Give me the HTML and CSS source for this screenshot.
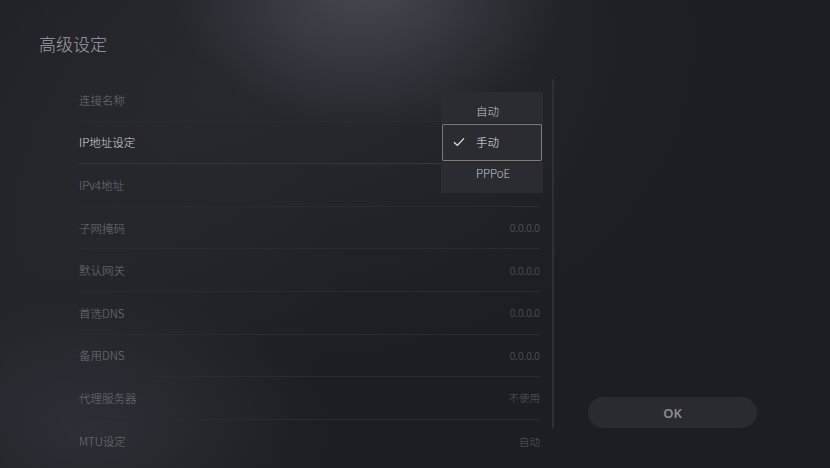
FILE: index.html
```html
<!DOCTYPE html>
<html>
<head>
    <title>高级设定</title>
    <link rel="stylesheet" href="styles.css">
</head>
<body>
    <div class="screen">
        <h1 class="title">高级设定</h1>

        <div class="content">
            <div class="settings">
                <div class="row"><span class="label">连接名称</span><span class="value"></span></div>
                <div class="row focused"><span class="label">IP地址设定</span><span class="value"></span></div>
                <div class="row"><span class="label">IPv4地址</span><span class="value"></span></div>
                <div class="row"><span class="label">子网掩码</span><span class="value">0.0.0.0</span></div>
                <div class="row"><span class="label">默认网关</span><span class="value">0.0.0.0</span></div>
                <div class="row"><span class="label">首选DNS</span><span class="value">0.0.0.0</span></div>
                <div class="row"><span class="label">备用DNS</span><span class="value">0.0.0.0</span></div>
                <div class="row"><span class="label">代理服务器</span><span class="value">不使用</span></div>
                <div class="row last"><span class="label">MTU设定</span><span class="value">自动</span></div>

                <div class="dropdown">
                    <div class="option">自动</div>
                    <div class="option selected">
                        <svg class="check" width="12" height="10" viewBox="0 0 12 10">
                            <path d="M1 5.2 L4.4 8.4 L11 1.4" fill="none" stroke="#e2e2e2" stroke-width="1.3"/>
                        </svg>
                        手动
                    </div>
                    <div class="option">PPPoE</div>
                </div>
            </div>

            <div class="scrollbar"></div>

            <div class="side">
                <button type="button" class="ok-button">OK</button>
            </div>
        </div>
    </div>
</body>
</html>
```

FILE: styles.css
```css
body {
    margin: 0;
    background-color: #1d1e23;
    font-family: "Noto Sans CJK SC", sans-serif;
    font-weight: 300;
}
.screen {
    width: 830px;
    height: 468px;
    overflow: hidden;
    box-sizing: border-box;
    padding-top: 34px;
    background:
        radial-gradient(ellipse 200px 150px at 370px -20px, rgba(120,120,132,0.4), rgba(120,120,132,0) 100%),
        radial-gradient(ellipse 400px 320px at 300px 40px, rgba(90,92,104,0.2), rgba(90,92,104,0) 100%),
        radial-gradient(ellipse 240px 140px at 90px 430px, rgba(90,96,108,0.22), rgba(90,96,108,0) 100%),
        radial-gradient(ellipse 300px 300px at 40px 260px, rgba(70,74,84,0.18), rgba(70,74,84,0) 100%),
        #1d1e23;
}
.title {
    margin: 0 0 0 39px;
    font-size: 17px;
    line-height: 20px;
    font-weight: 300;
    color: #a0a0a6;
}
.content {
    display: flex;
    margin-top: 25px;
}
.settings {
    position: relative;
    margin-left: 79px;
    width: 461px;
}
.row {
    display: flex;
    justify-content: space-between;
    align-items: center;
    height: 42.6px;
    box-sizing: border-box;
    border-bottom: 1px solid #292b30;
    font-size: 11.5px;
}
.row.last {
    border-bottom: none;
}
.label {
    color: #707176;
}
.row.focused {
    border-bottom-color: #34363b;
}
.row.focused .label {
    color: #d6d6d8;
}
.value {
    font-size: 10.5px;
    color: #5a5c61;
}
.dropdown {
    position: absolute;
    left: 362px;
    top: 13px;
    width: 102px;
    box-sizing: border-box;
    padding: 3.5px 0 4.5px;
    background-color: #2a2c31;
}
.option {
    position: relative;
    height: 31px;
    line-height: 31px;
    padding-left: 35px;
    font-size: 11.5px;
    color: #c8c8ca;
}
.option.selected {
    color: #e6e6e8;
}
.option.selected::before {
    content: "";
    position: absolute;
    left: 1px;
    right: 1px;
    top: -3px;
    bottom: -3px;
    border: 1px solid #7a7a7e;
    border-bottom-color: #8a7a70;
    border-radius: 2px;
    box-shadow: 0 0 2px rgba(0,0,0,0.5);
}
.check {
    position: absolute;
    left: 12px;
    top: 10px;
}
.scrollbar {
    width: 2px;
    height: 349px;
    margin-left: 12px;
    background-color: #2e3036;
}
.side {
    height: 349px;
    display: flex;
    align-items: flex-end;
    padding-left: 34px;
}
.ok-button {
    width: 169px;
    height: 31px;
    border: none;
    border-radius: 16px;
    background-color: #2a2b30;
    color: #8c8c90;
    font-family: "Noto Sans", sans-serif;
    font-size: 13px;
    font-weight: 600;
    cursor: pointer;
}
```
